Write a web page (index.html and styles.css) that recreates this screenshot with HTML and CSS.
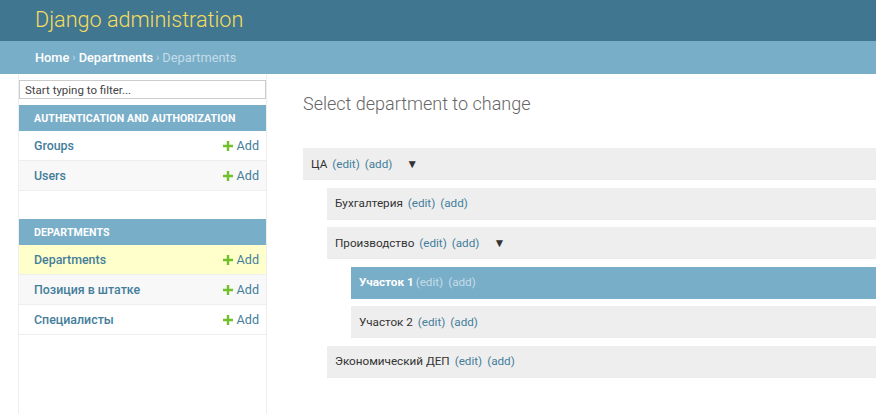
FILE: index.html
```html
<!DOCTYPE html>
<html lang="ru">
<head>
<meta charset="utf-8">
<title>Select department to change</title>
<link rel="stylesheet" href="styles.css">
</head>
<body>
<header class="header">
  <h1 class="brand">Django administration</h1>
</header>
<nav class="breadcrumbs">
  <a href="#">Home</a><span class="sep">›</span><a href="#">Departments</a><span class="sep">›</span><span class="current">Departments</span>
</nav>
<div class="main">
  <aside class="sidebar">
    <input class="filter" type="text" placeholder="Start typing to filter...">
    <div class="module">
      <div class="caption">Authentication and Authorization</div>
      <div class="mrow"><a class="mname" href="#">Groups</a><a class="add" href="#"><svg class="plus" viewBox="0 0 10 10"><path d="M3.8 0h2.4v3.8H10v2.4H6.2V10H3.8V6.2H0V3.8h3.8z"/></svg>Add</a></div>
      <div class="mrow alt"><a class="mname" href="#">Users</a><a class="add" href="#"><svg class="plus" viewBox="0 0 10 10"><path d="M3.8 0h2.4v3.8H10v2.4H6.2V10H3.8V6.2H0V3.8h3.8z"/></svg>Add</a></div>
    </div>
    <div class="module">
      <div class="caption">Departments</div>
      <div class="mrow current-model"><a class="mname" href="#">Departments</a><a class="add" href="#"><svg class="plus" viewBox="0 0 10 10"><path d="M3.8 0h2.4v3.8H10v2.4H6.2V10H3.8V6.2H0V3.8h3.8z"/></svg>Add</a></div>
      <div class="mrow alt"><a class="mname" href="#">Позиция в штатке</a><a class="add" href="#"><svg class="plus" viewBox="0 0 10 10"><path d="M3.8 0h2.4v3.8H10v2.4H6.2V10H3.8V6.2H0V3.8h3.8z"/></svg>Add</a></div>
      <div class="mrow"><a class="mname" href="#">Специалисты</a><a class="add" href="#"><svg class="plus" viewBox="0 0 10 10"><path d="M3.8 0h2.4v3.8H10v2.4H6.2V10H3.8V6.2H0V3.8h3.8z"/></svg>Add</a></div>
    </div>
  </aside>
  <section class="content">
    <h2 class="title">Select department to change</h2>
    <ul class="tree">
      <li>
        <div class="node">ЦА <a href="#">(edit)</a> <a href="#">(add)</a> <span class="toggle">▼</span></div>
        <ul class="tree sub">
          <li><div class="node">Бухгалтерия <a href="#">(edit)</a> <a href="#">(add)</a></div></li>
          <li>
            <div class="node">Производство <a href="#">(edit)</a> <a href="#">(add)</a> <span class="toggle">▼</span></div>
            <ul class="tree sub">
              <li><div class="node selected"><strong>Участок 1</strong> <a href="#">(edit)</a> <a href="#">(add)</a></div></li>
              <li><div class="node">Участок 2 <a href="#">(edit)</a> <a href="#">(add)</a></div></li>
            </ul>
          </li>
          <li><div class="node">Экономический ДЕП <a href="#">(edit)</a> <a href="#">(add)</a></div></li>
        </ul>
      </li>
    </ul>
  </section>
</div>
</body>
</html>
```
FILE: styles.css
```css
* { box-sizing: border-box; }
html, body { margin: 0; padding: 0; }
body {
  font-family: Roboto, "Liberation Sans", sans-serif;
  color: #333;
  background: #fff;
  height: 414px;
  overflow: hidden;
}
a { text-decoration: none; }

.header {
  background: #417690;
  height: 41px;
  padding: 0 35px;
  display: flex;
  align-items: center;
}
.brand {
  margin: 0;
  font-size: 21.6px;
  font-weight: 300;
  color: #f5dd5d;
  line-height: 1;
  position: relative;
  top: -1px;
}

.breadcrumbs {
  background: #79aec8;
  height: 33px;
  padding: 0 35px;
  display: flex;
  align-items: center;
  font-size: 12.8px;
  color: #c4dce8;
}
.breadcrumbs a { color: #fff; font-weight: 500; }
.breadcrumbs .sep { margin: 0 3px; color: #c4dce8; font-size: 11px; }
.breadcrumbs .current { color: #c4dce8; }

.main { display: flex; height: 340px; }

.sidebar {
  margin-left: 18px;
  width: 249px;
  flex: none;
  border-left: 1px solid #eee;
  border-right: 1px solid #eee;
  padding-top: 6px;
}
.filter {
  display: block;
  width: 247px;
  height: 19px;
  margin: 0 0 6px 0;
  border: 1px solid #ccc;
  padding: 0 5px;
  font-family: Roboto, "Liberation Sans", sans-serif;
  font-size: 11.5px;
  color: #333;
}
.filter::placeholder { color: #444; }

.module { margin-bottom: 28px; }
.caption {
  background: #79aec8;
  color: #fff;
  height: 26px;
  padding: 0 15px;
  display: flex;
  align-items: center;
  font-size: 10.6px;
  font-weight: 700;
  text-transform: uppercase;
  letter-spacing: 0.1px;
  white-space: nowrap;
}
.mrow {
  height: 30px;
  display: flex;
  align-items: center;
  justify-content: space-between;
  padding: 0 7px 0 15px;
  border-bottom: 1px solid #eee;
  font-size: 12.4px;
}
.mrow.alt { background: #f8f8f8; }
.mrow.current-model { background: #ffffcc; }
.mname { color: #447e9b; font-weight: 500; }
.add {
  color: #447e9b;
  display: flex;
  align-items: center;
  font-size: 12.6px;
}
.plus { width: 10px; height: 10px; fill: #70bf2b; margin-right: 4px; }

.content {
  flex: 1;
  padding: 0 0 0 36px;
  min-width: 0;
}
.title {
  margin: 20px 0 0 0;
  font-size: 18px;
  font-weight: 300;
  color: #666;
  line-height: 20px;
  height: 20px;
}
.tree {
  list-style: none;
  margin: 34px 0 0 0;
  padding: 0;
}
.tree.sub { margin: 0 0 0 24px; }
.node {
  background: #eee;
  height: 32px;
  margin-bottom: 7.6px;
  padding: 0 8px;
  display: flex;
  align-items: center;
  font-size: 11.7px;
  color: #333;
  white-space: pre;
  border-bottom: 1px solid #ebebeb;
}
.node a { color: #447e9b; margin-left: 2px; }
.node a + a { margin-left: 5px; }
.node .toggle { margin-left: 14px; font-size: 12px; color: #333; }
.node.selected { background: #79aec8; color: #fff; border-bottom-color: #79aec8; }
.node.selected strong { font-weight: 700; }
.node.selected a { color: #c4dce8; }
```
